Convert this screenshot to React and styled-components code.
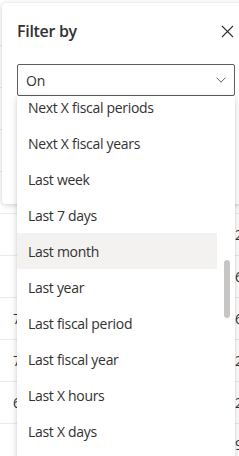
import React from "react";
import styled, { createGlobalStyle } from "styled-components";

const GlobalStyle = createGlobalStyle`
  html, body {
    margin: 0;
    padding: 0;
    background: #ffffff;
    overflow: hidden;
  }
  body {
    font-family: "Open Sans", "Noto Sans", Arial, sans-serif;
    color: #323130;
  }
`;

const options = [
  "Next X fiscal periods",
  "Next X fiscal years",
  "Last week",
  "Last 7 days",
  "Last month",
  "Last year",
  "Last fiscal period",
  "Last fiscal year",
  "Last X hours",
  "Last X days",
  "Last X weeks",
];

const tableRows = [
  { left: "", right: "" },
  { left: "", right: "" },
  { left: "", right: "" },
  { left: "", right: "" },
  { left: "", right: "2" },
  { left: "", right: "6" },
  { left: "7", right: "6" },
  { left: "7", right: "2" },
  { left: "6", right: "2" },
  { left: "", right: "9" },
];

const Page = styled.div`
  position: relative;
  width: 239px;
  height: 456px;
  overflow: hidden;
`;

const Table = styled.div`
  display: flex;
  flex-direction: column;
  padding-top: 3px;
`;

const TableHead = styled.div`
  height: 42px;
  border-bottom: 1px solid #edebe9;
`;

const TableRow = styled.div`
  height: 41px;
  display: flex;
  align-items: center;
  justify-content: space-between;
  border-bottom: 1px solid #edebe9;
  font-size: 14px;
  padding: 0 0 0 13px;
`;

const Cell = styled.span`
  font-family: "Open Sans", sans-serif;
  font-size: 14px;
  color: #323130;
  width: ${(p) => p.$width}px;
`;

const Panel = styled.div`
  position: absolute;
  top: 3px;
  left: 2px;
  width: 250px;
  height: 201px;
  background: #ffffff;
  border-radius: 4px;
  box-shadow: 0 0 4px rgba(0, 0, 0, 0.12), 0 2px 6px rgba(0, 0, 0, 0.1);
  display: flex;
  flex-direction: column;
`;

const Header = styled.div`
  box-sizing: border-box;
  display: flex;
  align-items: center;
  justify-content: space-between;
  height: 22px;
  margin-top: 17px;
  padding: 0 0 0 15px;
  width: 232px;
`;

const Title = styled.h2`
  margin: 0;
  font-size: 16px;
  font-weight: 600;
  line-height: 22px;
  letter-spacing: -0.3px;
  color: #323130;
`;

const CloseButton = styled.button`
  border: none;
  background: none;
  padding: 0;
  width: 14px;
  height: 14px;
  display: flex;
  align-items: center;
  justify-content: center;
`;

const SelectWrap = styled.div`
  position: relative;
  margin: 22px 0 0 15px;
  width: 218px;
`;

const SelectBox = styled.div`
  box-sizing: border-box;
  height: 32px;
  border: 1px solid #605e5c;
  border-radius: 2px;
  display: flex;
  align-items: center;
  justify-content: space-between;
  padding: 0 8px 0 8px;
  font-size: 14px;
  letter-spacing: -0.2px;
  color: #323130;
`;

const Dropdown = styled.div`
  position: absolute;
  top: 32px;
  left: 0;
  width: 218px;
  height: 380px;
  background: #ffffff;
  box-shadow: 0 3px 8px rgba(0, 0, 0, 0.14), 0 0 3px rgba(0, 0, 0, 0.1);
  display: flex;
  overflow: hidden;
`;

const List = styled.div`
  width: 200px;
  display: flex;
  flex-direction: column;
  margin-top: -7px;
`;

const Item = styled.div`
  height: 36px;
  flex-shrink: 0;
  display: flex;
  align-items: center;
  padding-left: 11px;
  font-size: 14px;
  letter-spacing: -0.3px;
  color: #323130;
  background: ${(p) => (p.$active ? "#f3f2f1" : "transparent")};
`;

const Track = styled.div`
  width: 18px;
  display: flex;
  justify-content: center;
`;

const Thumb = styled.div`
  width: 6px;
  height: 58px;
  margin-top: 164px;
  margin-left: 2px;
  border-radius: 3px;
  background: #c8c6c4;
`;

export default function App() {
  return (
    <>
      <GlobalStyle />
      <Page>
        <Table>
          <TableHead />
          {tableRows.map((r, i) => (
            <TableRow key={i}>
              <Cell $width={40}>{r.left}</Cell>
              <Cell $width={4}>{r.right}</Cell>
            </TableRow>
          ))}
        </Table>
        <Panel>
          <Header>
            <Title>Filter by</Title>
            <CloseButton aria-label="Close">
              <svg width="13" height="13" viewBox="0 0 13 13">
                <path
                  d="M1 1 L12 12 M12 1 L1 12"
                  stroke="#323130"
                  strokeWidth="1.1"
                  fill="none"
                />
              </svg>
            </CloseButton>
          </Header>
          <SelectWrap>
            <SelectBox>
              <span>On</span>
              <svg width="10" height="6" viewBox="0 0 10 6">
                <path
                  d="M0.5 0.6 L5 5.2 L9.5 0.6"
                  stroke="#605e5c"
                  strokeWidth="1"
                  fill="none"
                />
              </svg>
            </SelectBox>
            <Dropdown>
              <List>
                {options.map((o) => (
                  <Item key={o} $active={o === "Last month"}>
                    {o}
                  </Item>
                ))}
              </List>
              <Track>
                <Thumb />
              </Track>
            </Dropdown>
          </SelectWrap>
        </Panel>
      </Page>
    </>
  );
}
